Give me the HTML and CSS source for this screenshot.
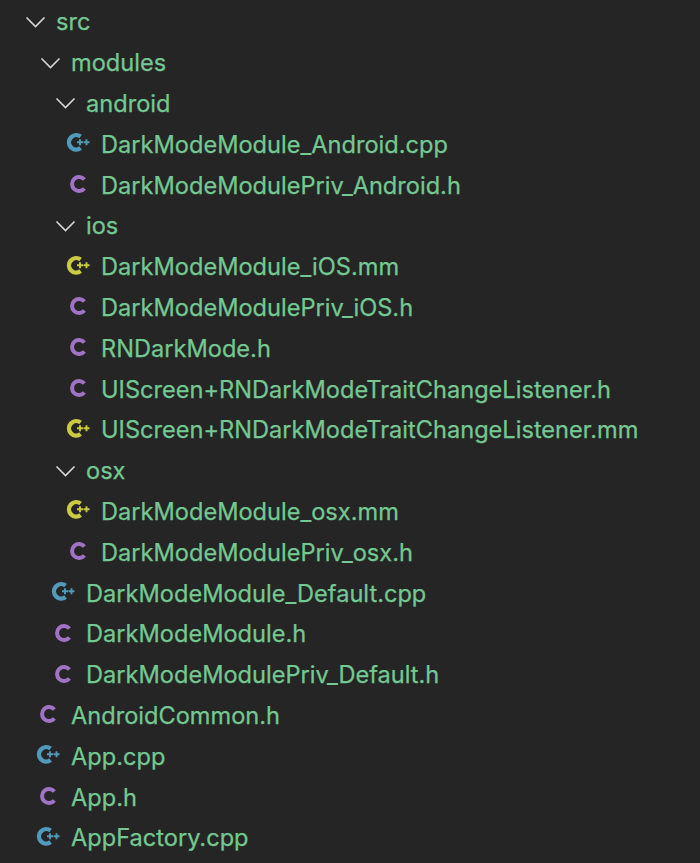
FILE: index.html
```html
<!DOCTYPE html>
<html lang="en">
<head>
  <meta charset="UTF-8">
  <title>File tree</title>
  <link rel="stylesheet" href="styles.css">
</head>
<body>
  <svg class="sprites" width="0" height="0" aria-hidden="true">
    <symbol id="chevron" viewBox="0 0 24 24" overflow="visible">
      <path d="M2.5 7.5 L11.5 16.5 L20.5 7.5" fill="none" stroke="currentColor" stroke-width="1.6"/>
    </symbol>
    <symbol id="c" viewBox="0 0 24 24" overflow="visible">
      <path d="M15.4 6.5 A7 7 0 1 0 15.4 15.5" fill="none" stroke="currentColor" stroke-width="4"/>
    </symbol>
    <symbol id="cpp" viewBox="0 0 24 24" overflow="visible">
      <path d="M11.6 4.6 A7.2 7.2 0 1 0 11.6 16" fill="none" stroke="currentColor" stroke-width="4.4"/>
      <path d="M8 10.3 H14 M11 7.3 V13.3 M14.5 10.3 H20.5 M17.5 7.3 V13.3" fill="none" stroke="currentColor" stroke-width="1.9"/>
    </symbol>
  </svg>

  <ul class="tree">
    <li class="row lv0"><svg class="icon chevron"><use href="#chevron"/></svg><span>src</span></li>
    <li class="row lv1"><svg class="icon chevron"><use href="#chevron"/></svg><span>modules</span></li>
    <li class="row lv2"><svg class="icon chevron"><use href="#chevron"/></svg><span>android</span></li>
    <li class="row lv3"><svg class="icon blue"><use href="#cpp"/></svg><span>DarkModeModule_Android.cpp</span></li>
    <li class="row lv3"><svg class="icon purple"><use href="#c"/></svg><span>DarkModeModulePriv_Android.h</span></li>
    <li class="row lv2"><svg class="icon chevron"><use href="#chevron"/></svg><span>ios</span></li>
    <li class="row lv3"><svg class="icon yellow"><use href="#cpp"/></svg><span>DarkModeModule_iOS.mm</span></li>
    <li class="row lv3"><svg class="icon purple"><use href="#c"/></svg><span>DarkModeModulePriv_iOS.h</span></li>
    <li class="row lv3"><svg class="icon purple"><use href="#c"/></svg><span>RNDarkMode.h</span></li>
    <li class="row lv3"><svg class="icon purple"><use href="#c"/></svg><span>UIScreen+RNDarkModeTraitChangeListener.h</span></li>
    <li class="row lv3"><svg class="icon yellow"><use href="#cpp"/></svg><span>UIScreen+RNDarkModeTraitChangeListener.mm</span></li>
    <li class="row lv2"><svg class="icon chevron"><use href="#chevron"/></svg><span>osx</span></li>
    <li class="row lv3"><svg class="icon yellow"><use href="#cpp"/></svg><span>DarkModeModule_osx.mm</span></li>
    <li class="row lv3"><svg class="icon purple"><use href="#c"/></svg><span>DarkModeModulePriv_osx.h</span></li>
    <li class="row lv2"><svg class="icon blue"><use href="#cpp"/></svg><span>DarkModeModule_Default.cpp</span></li>
    <li class="row lv2"><svg class="icon purple"><use href="#c"/></svg><span>DarkModeModule.h</span></li>
    <li class="row lv2"><svg class="icon purple"><use href="#c"/></svg><span>DarkModeModulePriv_Default.h</span></li>
    <li class="row lv1"><svg class="icon purple"><use href="#c"/></svg><span>AndroidCommon.h</span></li>
    <li class="row lv1"><svg class="icon blue"><use href="#cpp"/></svg><span>App.cpp</span></li>
    <li class="row lv1"><svg class="icon purple"><use href="#c"/></svg><span>App.h</span></li>
    <li class="row lv1"><svg class="icon blue"><use href="#cpp"/></svg><span>AppFactory.cpp</span></li>
  </ul>
</body>
</html>
```

FILE: styles.css
```css
* { padding:0; margin:0; box-sizing:border-box; }
ul,li { list-style:none; }

:root {
  --color-bg: #252526;
  --color-text: #73c991;
  --color-chevron: #d7d7d7;
  --color-purple: #a074c4;
  --color-blue: #519aba;
  --color-yellow: #cbcb41;

  --row-height: 40.8px;
  --indent: 15px;
}

html, body {
  height: 100%;
  overflow: hidden;
}

body {
  background-color: var(--color-bg);
  color: var(--color-text);
  font-family: Inter, "Noto Sans", sans-serif;
  font-size: 23.6px;
  -webkit-text-stroke: 0.25px var(--color-text);
}

.sprites {
  position: absolute;
}

.tree {
  padding-top: 1.5px;
}

.row {
  display: flex;
  align-items: center;
  gap: 8px;
  height: var(--row-height);
  white-space: nowrap;
}

.lv0 { padding-left: 24px; }
.lv1 { padding-left: calc(24px + var(--indent)); }
.lv2 { padding-left: calc(24px + var(--indent) * 2); }
.lv3 { padding-left: calc(24px + var(--indent) * 3); }

.icon {
  width: 24px;
  height: 24px;
  flex-shrink: 0;
  overflow: visible;
}

.chevron { color: var(--color-chevron); }
.purple { color: var(--color-purple); }
.blue { color: var(--color-blue); }
.yellow { color: var(--color-yellow); }
```
